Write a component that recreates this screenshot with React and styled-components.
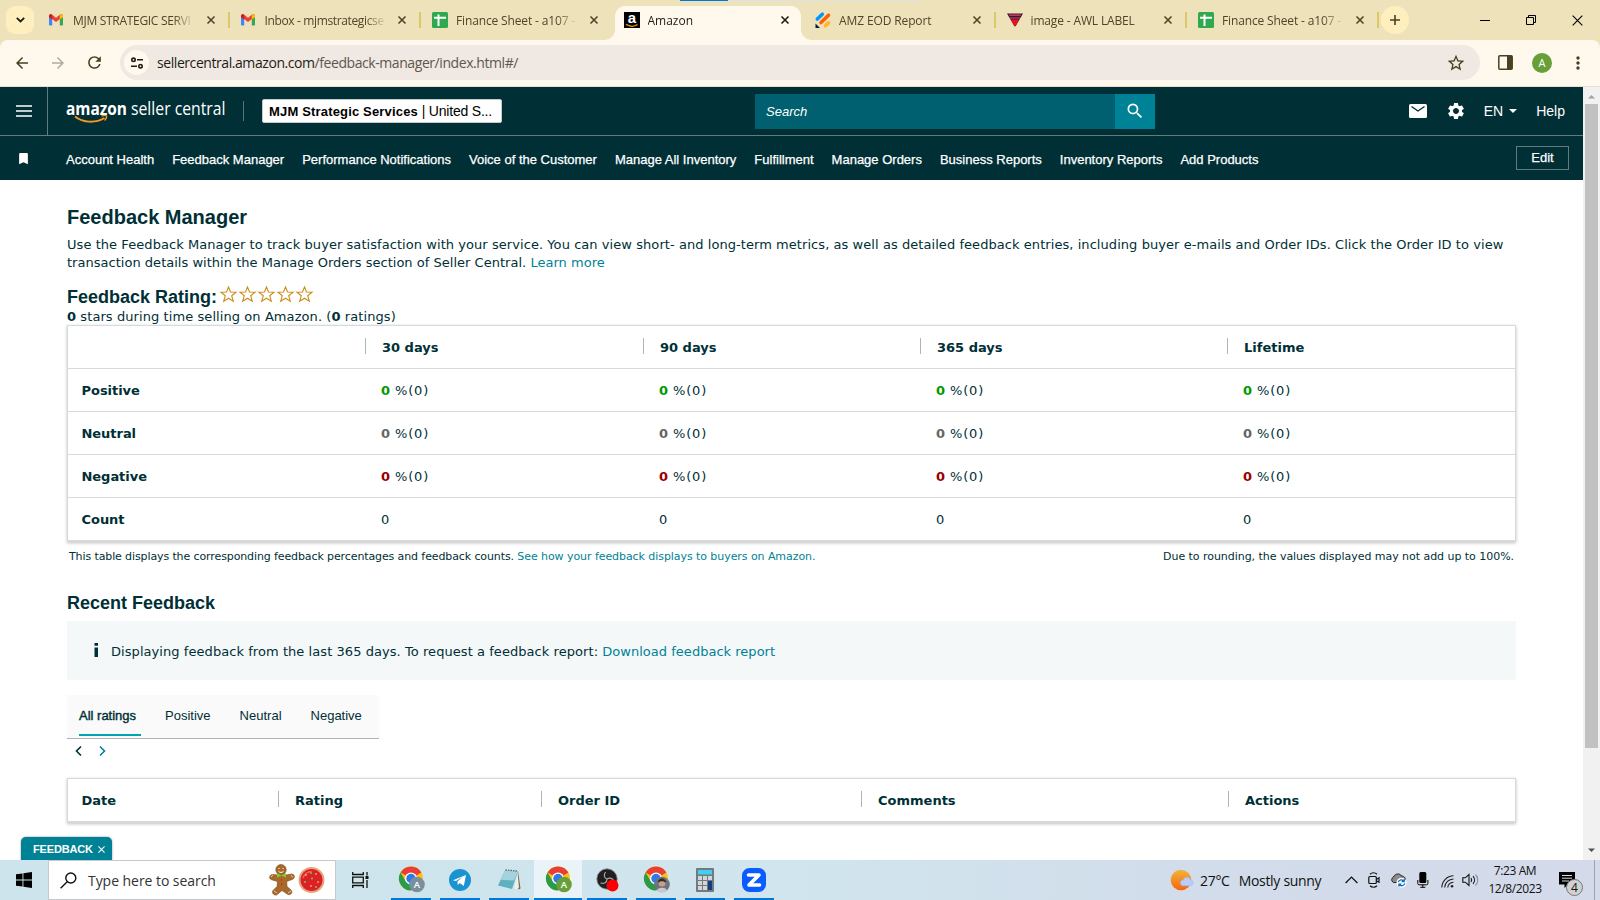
import React from 'react';
import styled, { createGlobalStyle } from 'styled-components';
import { MdArrowBack, MdArrowForward, MdRefresh, MdStarBorder, MdMoreVert, MdSettings, MdSearch, MdBookmark } from 'react-icons/md';

const GlobalStyle = createGlobalStyle`
  * { box-sizing: border-box; }
  body { margin: 0; overflow: hidden; background: #fff; }
  svg { display: block; flex: none; overflow: visible; }
`;

const ui = `'Open Sans', 'Noto Sans', sans-serif`;
const arial = `'Liberation Sans', Arial, sans-serif`;
const verdana = `Verdana, 'DejaVu Sans', sans-serif`;

/* ---------- data ---------- */

const browserTabs = [
  { icon: 'gmail', title: 'MJM STRATEGIC SERVI', spacing: -0.3 },
  { icon: 'gmail', title: 'Inbox - mjmstrategicse', spacing: -0.36 },
  { icon: 'sheet', title: 'Finance Sheet - a107 -', spacing: -0.14 },
  { icon: 'amazon', title: 'Amazon', active: true },
  { icon: 'amz', title: 'AMZ EOD Report', spacing: -0.12 },
  { icon: 'awl', title: 'image - AWL LABEL', spacing: -0.15 },
  { icon: 'sheet', title: 'Finance Sheet - a107 -', spacing: -0.14 },
];

const navLinks = [
  'Account Health', 'Feedback Manager', 'Performance Notifications', 'Voice of the Customer',
  'Manage All Inventory', 'Fulfillment', 'Manage Orders', 'Business Reports', 'Inventory Reports', 'Add Products',
];

const periods = ['30 days', '90 days', '365 days', 'Lifetime'];

const ratingRows = [
  { label: 'Positive', color: '#009900' },
  { label: 'Neutral', color: '#666666' },
  { label: 'Negative', color: '#990000' },
];

const feedbackColumns = ['Date', 'Rating', 'Order ID', 'Comments', 'Actions'];

/* ---------- icons ---------- */

const GmailIcon = () => (
  <svg width="16" height="16" viewBox="1 0 16 16">
    <path d="M1 4.2v8.6c0 .5.3.8.8.8h2.4V6.7z" fill="#4285f4" />
    <path d="M15 4.2v8.6c0 .5-.3.8-.8.8h-2.4V6.7z" fill="#34a853" />
    <path d="M1 4c0-1.600 1.700-2.300 2.900-1.400L8 5.700l4.100-3.100C13.300 1.700 15 2.400 15 4v.8L8 10 1 4.800z" fill="#ea4335" />
    <path d="M11.800 2.900C13.200 1.700 15 2.400 15 4v1.200l-3.200 2.300z" fill="#fbbc04" />
    <path d="M1 4c0-1.600 1.800-2.300 3.200-1.100v4.600L1 5.200z" fill="#c5221f" />
  </svg>
);

const SheetIcon = () => (
  <svg width="16" height="16" viewBox="0 0 16 16">
    <rect width="16" height="16" rx="1.500" fill="#2fa84f" />
    <path d="M2 5.800h12M6.500 2.500v11.500" stroke="#fff" strokeWidth="2" />
  </svg>
);

const AmazonIcon = () => (
  <svg width="16" height="16" viewBox="0 0 16 16">
    <rect width="16" height="16" fill="#000" />
    <text x="8" y="11" textAnchor="middle" fontFamily={arial} fontWeight="700" fontSize="15" fill="#fff">a</text>
    <path d="M2 12.300c3.500 2.600 8.500 2.600 11.500.3" stroke="#f90" strokeWidth="1.200" fill="none" />
  </svg>
);

const AmzIcon = () => (
  <svg width="16" height="16" viewBox="0 0 16 16" strokeLinecap="round" strokeWidth="3.600">
    <path d="M2.300 7l5-4.800" stroke="#0099ff" />
    <path d="M6 10.500l7.500-7.300" stroke="#ff6100" />
    <path d="M10.500 13.800l3-2.900" stroke="#ffb629" />
    <path d="M0.500 11.500v4.500h4.500z" fill="#0a1551" />
  </svg>
);

const AwlIcon = () => (
  <svg width="16" height="16" viewBox="0 0 16 16">
    <path d="M0 1.500h16L8.600 14.300H7.400z" fill="#3a1433" />
    <path d="M2.200 3.200h11.600M3 6h10" stroke="#d94a6a" strokeWidth="1.200" />
    <path d="M3.600 7.600h8.800L8 14.400z" fill="#f0101c" />
  </svg>
);

const favicons = { gmail: GmailIcon, sheet: SheetIcon, amazon: AmazonIcon, amz: AmzIcon, awl: AwlIcon };

const CrossIcon = ({ size = 8, width = 1.6 }) => (
  <svg width={size} height={size} viewBox="0 0 8 8" stroke="currentColor" strokeWidth={width}>
    <path d="M.5.5l7 7M7.500.5l-7 7" />
  </svg>
);

const SiteIcon = () => (
  <svg width="14" height="14" viewBox="0 0 14 14" stroke="#1f1b16" strokeWidth="1.600" fill="none">
    <circle cx="3.500" cy="3.800" r="1.700" />
    <path d="M7 3.800h6M1 10.200h6" />
    <circle cx="10.500" cy="10.200" r="1.700" />
  </svg>
);

const SellerCentralLogo = () => (
  <svg width="162" height="26" viewBox="0 0 162 26">
    <text x="0" y="14.500" fontFamily={ui} fontWeight="700" fontSize="18" textLength="61" lengthAdjust="spacingAndGlyphs" fill="#fff">amazon</text>
    <text x="65" y="14.500" fontFamily={ui} fontSize="18.500" textLength="94.500" lengthAdjust="spacingAndGlyphs" fill="#fff">seller central</text>
    <path d="M9 16.500c8 6.500 20.500 6.800 29.500 1.500" stroke="#f7981f" strokeWidth="1.900" fill="none" />
    <path d="M35.500 16.200c2-.9 4-.9 5-.3.400 1.200-.5 3.100-1.900 4.600" stroke="#f7981f" strokeWidth="1.300" fill="none" />
  </svg>
);

const MailIcon = () => (
  <svg width="18" height="14" viewBox="0 0 18 14">
    <rect width="18" height="14" rx="1.500" fill="#fff" />
    <path d="M2.500 2.500L9 7l6.500-4.500" stroke="#002f36" strokeWidth="1.400" fill="none" />
  </svg>
);

const StarIcon = () => (
  <svg width="17" height="17" viewBox="0 0 17 17">
    <path d="M8.500 1l2 5 5.500.2-4.300 3.500 1.600 5.500-4.800-3-4.800 3 1.600-5.500L1 6.200 6.500 6z" fill="#fff" stroke="#cb8d18" strokeWidth="1.100" />
  </svg>
);

const Chevron = ({ flip }) => (
  <svg width="7" height="10" viewBox="0 0 7 10" fill="none" stroke="currentColor" strokeWidth="1.600">
    <path d={flip ? 'M1 .5l4.500 4.500L1 9.500' : 'M6 .5L1.500 5 6 9.500'} />
  </svg>
);

const WindowsIcon = () => (
  <svg width="16" height="16" viewBox="0 0 16 16" fill="#000">
    <path d="M0 2.300l6.500-.9v6.100H0zM7.400 1.200L16 0v7.500H7.400zM0 8.500h6.500v6.100L0 13.700zM7.400 8.500H16V16l-8.600-1.200z" />
  </svg>
);

const LoupeIcon = () => (
  <svg width="17" height="17" viewBox="0 0 17 17" fill="none" stroke="#111" strokeWidth="1.400">
    <circle cx="10.800" cy="6" r="5" />
    <path d="M7.200 9.700L.6 16.300" />
  </svg>
);

const GingerbreadIcon = () => (
  <svg width="26" height="32" viewBox="0 0 26 32">
    <g fill="#a8692a" stroke="#7c4715" strokeWidth=".6">
      <path d="M3.500 10.500c-3 0-4 4-1 5.200L8.500 17.500 8 22.500l-4 4c-1.500 2 .5 5 3.500 4.500l5.500-4.500 6 4c3.500.6 5-2.500 3-4.500L18 22.500l-.3-5 5.300-2c3.500-1 3-5 0-5.500L17 11H9z" />
      <circle cx="12" cy="5.700" r="5.200" />
    </g>
    <path d="M9.500 4.500h1M13.500 4.500h1M9.500 7.300c1.500 1.500 3.500 1.500 5 0" stroke="#fff" strokeWidth="1" fill="none" />
    <path d="M8 9.500l4.500 1.700L17 9.500v4l-4.500-1.800L8 13.500z" fill="#7ed321" />
    <path d="M12 16h1M12 20h1" stroke="#d5262d" strokeWidth="2" />
    <path d="M2 13l2-2M22 11l1.800 2.500M5 27l3 2M19 29l3-2" stroke="#f3dfc0" strokeWidth=".8" />
  </svg>
);

const CookieIcon = () => (
  <svg width="27" height="28" viewBox="0 0 27 28">
    <circle cx="13.500" cy="14" r="13" fill="#e4a77b" />
    <circle cx="13.500" cy="14" r="11" fill="#dc2028" />
    <path d="M5 12c1-4 5-6.500 8.500-6.500" stroke="#f0625f" strokeWidth="1.500" fill="none" />
    <g fill="#ffb43c"><circle cx="8" cy="9" r=".9" /><circle cx="18" cy="8" r=".9" /><circle cx="13" cy="20" r=".9" /><circle cx="20" cy="16" r=".9" /></g>
    <g fill="#7bd34a"><circle cx="13" cy="7" r=".9" /><circle cx="7" cy="16" r=".9" /><circle cx="18" cy="21" r=".9" /><circle cx="14" cy="12.500" r=".9" /></g>
  </svg>
);

const TaskViewIcon = () => (
  <svg width="17" height="16" viewBox="0 0 17 16" fill="none" stroke="#111" strokeWidth="1.300">
    <path d="M.7 0v2.500h10.600V0M.7 16v-2.500h10.600V16M.7 5.200h10.600v5.600H.7zM15 0v3.500M15 8v8" />
    <path d="M13.500 5.500h3" strokeWidth="3" />
  </svg>
);

const ChromeIcon = ({ badge, letter, photo }) => (
  <svg width="28" height="28" viewBox="-1.500 0 28 28">
    <circle cx="12.500" cy="12.500" r="12" fill="#fbc116" />
    <path d="M12.500 12.500L2.100 6.500a12 12 0 0 1 20.800 0z" fill="#ea3e30" />
    <path d="M2.100 6.500a12 12 0 0 0 10.400 18l5.200-9-10.400 0z" fill="#2a9b49" />
    <circle cx="12.500" cy="12.500" r="6" fill="#fff" />
    <circle cx="12.500" cy="12.500" r="4.700" fill="#3079ea" />
    <circle cx="18.500" cy="18.500" r="7.800" fill={badge} />
    {letter && <text x="18.500" y="22" textAnchor="middle" fontFamily={ui} fontSize="9.500" fontWeight="600" fill="#fff">A</text>}
    {photo && (
      <g>
        <path d="M13.500 24.800c0-4 10-4 10 0a8 8 0 0 1-10 0z" fill="#c7c9d0" />
        <circle cx="18.500" cy="17" r="3.500" fill="#c79f87" />
        <path d="M14.500 17c-.5-6 8.500-6 8 0-1.500-2-6-2.500-8 0z" fill="#2f2b2b" />
      </g>
    )}
  </svg>
);

const TelegramIcon = () => (
  <svg width="22" height="22" viewBox="0 0 22 22">
    <circle cx="11" cy="11" r="11" fill="#1c93d1" />
    <path d="M4 11.200l13-5.300-2.200 11.200-4-3-2 1.900-.4-3.500 5.200-4.600-6.700 4.200z" fill="#fff" />
  </svg>
);

const NotepadIcon = () => (
  <svg width="24" height="24" viewBox="0 0 24 24">
    <path d="M21 3l2.500 17.500-1.500 1-3-3.500z" fill="#7a6a48" />
    <path d="M20.500 4.500L22 19.500l-3.500 2.300-1-2.800z" fill="#eceff0" />
    <path d="M8 2.500l13 1L15 21 1 17.500z" fill="#5fafbf" />
    <path d="M8 2.500l13 1-4 9L4 12z" fill="#a3d3dc" />
    <path d="M8.500 2l12.500 1" stroke="#666" strokeWidth="1.300" strokeDasharray="1.500 1" />
  </svg>
);

const ObsIcon = () => (
  <svg width="24" height="24" viewBox="0 0 24 24">
    <circle cx="12" cy="11" r="10.200" fill="#211f20" stroke="#888" strokeWidth=".8" />
    <path d="M12 11c-3-1-3.500-4-1.500-7M12 11c3-2 6-.5 7 2.500M12 11c0 3.500-3 5-6.500 4" stroke="#a9a9a9" strokeWidth="1.200" fill="none" />
    <circle cx="17.500" cy="17.500" r="6" fill="#f00" />
  </svg>
);

const CalculatorIcon = () => (
  <svg width="18" height="24" viewBox="0 0 18 24">
    <rect width="18" height="24" rx="1" fill="#73797f" />
    <rect x="2" y="2" width="14" height="4.500" fill="#3fd0f4" />
    <g fill="#d3d6d9">
      <path d="M2 8h4v4H2zM7 8h4v4H7zM12 8h4v4h-4zM2 13h4v4H2zM7 13h4v4H7zM2 18h4v4H2zM7 18h4v4H7z" />
    </g>
    <path d="M12 13h4v9h-4z" fill="#103f7c" />
  </svg>
);

const ZoomIcon = () => (
  <svg width="24" height="24" viewBox="0 0 24 24">
    <rect width="24" height="24" rx="7.500" fill="#0b5cff" />
    <path d="M6.500 7h10.500L7 17H17.500" stroke="#fff" strokeWidth="3.600" strokeLinejoin="round" strokeLinecap="round" fill="none" />
  </svg>
);

const WeatherIcon = () => (
  <svg width="23" height="22" viewBox="0 0 23 22">
    <defs>
      <linearGradient id="sun" x1="0" y1="0" x2="0" y2="1">
        <stop offset="0" stopColor="#f2b53c" />
        <stop offset="1" stopColor="#f7640e" />
      </linearGradient>
    </defs>
    <circle cx="10" cy="11" r="10.300" fill="url(#sun)" />
    <path d="M11 16.800a3.200 3.200 0 0 1 1.300-6c1-3.400 6-3.500 7.200-.1 3.200.3 3.700 5 .3 6.100z" fill="#b9cdf6" stroke="#9ab6ee" strokeWidth=".5" />
  </svg>
);

const MeetIcon = () => (
  <svg width="12" height="16" viewBox="0 0 12 16" fill="none" stroke="#111" strokeWidth="1.200">
    <path d="M2 2.200C4 .3 7 .3 9 2.200M2 13.800c2 1.900 5 1.900 7 0" />
    <rect x=".8" y="4.500" width="7.500" height="7" rx="1" />
    <path d="M8.300 7.500l2.700-1.700v4.500L8.300 8.700" />
  </svg>
);

const CloudIcon = () => (
  <svg width="17" height="15" viewBox="0 0 17 15">
    <path d="M3.500 9.500a3 3 0 0 1 0-5.500C5 .3 10 0 11.500 3c3 0 4.500 2.500 3.500 5l-3 1.500z" fill="#8b8b8b" stroke="#222" strokeWidth="1" />
    <circle cx="11.500" cy="9.800" r="5" fill="#fff" />
    <path d="M8.300 9.200c.7-2.600 4-3.200 5.700-1M14.800 10.400c-.7 2.600-4 3.200-5.700 1M14.200 6v2.500h-2.500M8.900 13.600v-2.500h2.500" stroke="#0f6cbd" strokeWidth="1.300" fill="none" />
  </svg>
);

const MicIcon = () => (
  <svg width="12" height="16" viewBox="0 0 12 16">
    <rect x="2.300" y="0" width="7" height="11" rx="1.500" fill="#000" />
    <path d="M.8 8v3.500c0 .8.5 1.300 1.300 1.300h7.500c.8 0 1.300-.5 1.300-1.300V8M5.800 12.500V15.300M3.300 15.300h5" stroke="#000" fill="none" strokeWidth="1" />
  </svg>
);

const WifiIcon = () => (
  <svg width="13" height="13" viewBox="0 0 13 13" fill="none" stroke="#222" strokeWidth="1.100">
    <path d="M.8 12.500C1 6 6 1 12.500.8M3.700 12.500c.3-5 4-8.300 8.800-8.500M6.800 12.500c.2-3 2.500-5 5.700-5.300" />
    <circle cx="11" cy="11.300" r="1.300" fill="#222" stroke="none" />
  </svg>
);

const SpeakerIcon = () => (
  <svg width="17" height="14" viewBox="0 0 17 14" fill="none" stroke="#111" strokeWidth="1.100">
    <path d="M.8 4.800h2.500L7 1.500v11L3.300 9.200H.8zM9 5c.8 1.200.8 2.800 0 4M11 3.200c2 2.200 2 5.400 0 7.600" />
    <path d="M13.500 1.500c3 3.200 3 7.800 0 11" stroke="#8b8f98" />
  </svg>
);

const NoticeIcon = () => (
  <svg width="16" height="16" viewBox="0 0 16 16">
    <path d="M0 0h16v12.500H9L5.500 16v-3.500H0z" fill="#000" />
    <path d="M3 3.500h10M3 6.200h10M3 9h7" stroke="#d5dde9" strokeWidth="1" />
  </svg>
);

/* ---------- browser frame ---------- */

const Screen = styled.div`
  width: 1600px;
  height: 900px;
  display: flex;
  flex-direction: column;
  overflow: hidden;
  background: #eee2bb;
  white-space: nowrap;
`;

const TabStrip = styled.div`
  position: relative;
  height: 40px;
  flex: none;
  display: flex;
  padding-left: 6px;
  font: 12px/16px ${ui};
  color: #4f4629;
`;

const TopStrip = styled.div`
  position: absolute;
  top: 0;
  left: 680px;
  width: 241px;
  height: 1px;
  background: linear-gradient(90deg, #0078d7 48px, #dfe1e0 48px);
`;

const TabSearch = styled.div`
  width: 28px;
  height: 28px;
  margin: 6px 4px 0 0;
  border-radius: 9px;
  background: #ffefbe;
  display: flex;
  align-items: center;
  justify-content: center;
`;

const BrowserTab = styled.div`
  position: relative;
  width: 191.5px;
  height: 40px;
  display: flex;
  align-items: center;
  padding-left: 11px;
  color: ${({ $active }) => ($active ? '#1f1b16' : '#4f4629')};

  &::before,
  &::after {
    content: '';
    display: ${({ $active }) => ($active ? 'block' : 'none')};
    position: absolute;
  }

  &::before {
    inset: 6px 3px 0 2px;
    border-radius: 10px 10px 0 0;
    background: #fff9ed;
  }

  /* flared feet of the active tab */
  &::after {
    inset: 30px -7px 0 -8px;
    background:
      radial-gradient(circle at 0 0, transparent 9.5px, #fff9ed 10px) left / 10px 10px no-repeat,
      radial-gradient(circle at 100% 0, transparent 9.5px, #fff9ed 10px) right / 10px 10px no-repeat;
  }

  > * { position: relative; }
`;

const TabDivider = styled.i`
  width: 2px;
  height: 16px;
  margin-left: 9px;
  background: #dfc765;
  visibility: ${({ $hidden }) => ($hidden ? 'hidden' : 'visible')};
`;

const TabTitle = styled.span`
  width: 122px;
  margin: 2px 8px 0;
  letter-spacing: ${({ $spacing = 0 }) => $spacing}px;
  mask-image: linear-gradient(90deg, #000 100px, transparent 122px);
`;

const TabClose = styled.span`
  width: 16px;
  display: flex;
  justify-content: center;
`;

const NewTab = styled.div`
  width: 28px;
  height: 28px;
  margin: 6px 0 0 2px;
  border-radius: 50%;
  background: #ffefbe;
  display: flex;
  align-items: center;
  justify-content: center;
`;

const WindowButtons = styled.div`
  margin-left: auto;
  display: flex;
  align-items: center;
  color: #000;

  > span {
    width: 46px;
    display: flex;
    justify-content: center;
  }
`;

const Toolbar = styled.div`
  height: 47px;
  flex: none;
  display: flex;
  align-items: center;
  padding: 0 0 1px 13px;
  background: #fff9ed;
  border-bottom: 1px solid #eadfce;
  border-radius: 8px 8px 0 0;
  color: #4a4022;
`;

const ToolButton = styled.span`
  width: 36px;
  flex: none;
  color: ${({ $muted }) => ($muted ? '#b3aa99' : 'inherit')};
`;

const AddressBar = styled.div`
  width: 1360px;
  flex: none;
  height: 35px;
  margin: 0 18px 0 -1px;
  padding: 0 14px 0 4px;
  display: flex;
  align-items: center;
  border-radius: 18px;
  background: #f0e8e2;
`;

const SiteButton = styled.div`
  width: 25px;
  height: 25px;
  margin-right: 8px;
  border-radius: 50%;
  background: #fff9ed;
  display: flex;
  align-items: center;
  justify-content: center;
`;

const Url = styled.span`
  flex: 1;
  padding-top: 1px;
  font: 14px/20px ${ui};
  letter-spacing: -0.43px;
  color: #5d574f;

  b { font-weight: 400; color: #1f1b16; }
`;

const Profile = styled.div`
  width: 20px;
  height: 20px;
  flex: none;
  margin: 0 16px 0 19px;
  border-radius: 50%;
  background: #689f38;
  color: #fff;
  font: 11px/20px ${ui};
  text-align: center;
`;

const Viewport = styled.div`
  flex: 1;
  min-height: 0;
  display: flex;
  background: #fff;
`;

const Scrollbar = styled.div`
  width: 17px;
  background: #f1f1f1;
  display: flex;
  flex-direction: column;
  align-items: center;
  justify-content: space-between;
  padding: 7px 0 7px;
`;

const ScrollThumb = styled.div`
  width: 13px;
  height: 644px;
  margin: 5px 0 auto;
  background: #c1c1c1;
`;

/* ---------- seller central ---------- */

const Page = styled.div`
  position: relative;
  width: 1583px;
  overflow: hidden;
  color: #002f36;
`;

const Masthead = styled.header`
  height: 49px;
  display: flex;
  align-items: center;
  background: #002f36;
  border-bottom: 1px solid #66797d;
  color: #fff;
  font: 14px/18px ${arial};
`;

const MenuButton = styled.div`
  width: 48px;
  height: 48px;
  padding-left: 16px;
  display: flex;
  align-items: center;
  border-right: 1px solid #66797d;
`;

const LogoLink = styled.div`
  width: 162px;
  height: 26px;
  margin: 3px 15px 0 18px;
`;

const ThinRule = styled.i`
  width: 1px;
  height: 20px;
  background: #5c6f73;
`;

const AccountBox = styled.div`
  width: 240px;
  height: 24px;
  margin: 0 253px 0 18px;
  padding: 0 6px;
  border-radius: 2px;
  border: 1px solid #c3cccd;
  background: #fff;
  color: #000;
  font: 14px/23px ${arial};
  letter-spacing: -0.2px;

  b { font-size: 13px; letter-spacing: 0.17px; }
`;

const SearchField = styled.div`
  width: 360px;
  height: 35px;
  padding-left: 11px;
  background: #00606f;
  font: italic 13px/35px ${arial};
`;

const SearchButton = styled.div`
  width: 40px;
  height: 35px;
  display: flex;
  align-items: center;
  justify-content: center;
  background: #008296;
`;

const HeaderTools = styled.div`
  margin-left: auto;
  padding-right: 18px;
  display: flex;
  align-items: center;

  > svg:first-child { margin-right: 19px; }
  > svg:nth-child(2) { margin-right: 18px; }
`;

const Caret = styled.i`
  margin: 0 19px 0 6px;
  border: 4.5px solid transparent;
  border-top-color: #fff;
  border-bottom: 0;
`;

const NavBar = styled.nav`
  height: 44px;
  display: flex;
  align-items: center;
  gap: 18px;
  padding: 0 14px 0 16px;
  background: #002f36;
  color: #fff;
  font: 13px/18px ${arial};
  -webkit-text-stroke: 0.25px #fff;

  > svg { margin: 0 17px 0 0; }
`;

const NavLink = styled.a`
  padding-top: 3px;
`;

const EditButton = styled.div`
  width: 53px;
  height: 24px;
  margin: 0 0 0 auto;
  border: 1px solid #66797d;
  text-align: center;
  line-height: 21px;
`;

const Main = styled.main`
  padding: 24px 67px 0;
  font: 13px/18px ${verdana};
`;

const Title = styled.h1`
  margin: 0 0 6px;
  font: bold 20px/26px ${arial};
`;

const Intro = styled.p`
  margin: 0 0 14px;
  letter-spacing: 0.061px;

  span { letter-spacing: 0.022px; }
`;

const Subtitle = styled.h2`
  margin: 0;
  display: flex;
  align-items: center;
  font: bold 18px/22px ${arial};
`;

const Stars = styled.span`
  display: flex;
  gap: 2px;
  margin: -5px 0 0 3px;
`;

const Summary = styled.div`
  height: 17px;
  letter-spacing: 0.08px;
`;

const Link = styled.a`
  color: #008296;
`;

const Table = styled.div`
  display: grid;
  grid-template-columns: ${({ $columns }) => $columns};
  border: 1px solid #d5dbdb;
  border-bottom-width: 2px;
  box-shadow: 0 1px 3px rgba(0, 0, 0, 0.25);
`;

const Cell = styled.div`
  height: ${({ $last }) => ($last ? 42 : 43)}px;
  padding-top: 2px;
  padding-left: ${({ $first }) => ($first ? 13.5 : 16)}px;
  display: flex;
  align-items: center;
  border-bottom: ${({ $last }) => ($last ? 0 : '1px solid #d5dbdb')};
  font-weight: ${({ $bold }) => ($bold ? 700 : 400)};
  letter-spacing: ${({ $bold }) => ($bold ? -0.04 : 0)}px;
`;

const HeadCell = styled(Cell)`
  padding-left: ${({ $first }) => ($first ? 13.5 : 0)}px;
  font-weight: 700;

  &::before {
    content: '';
    display: ${({ $first }) => ($first ? 'none' : 'block')};
    width: 1px;
    height: 16px;
    margin: -4px 16px 0 0;
    background: #aab7b8;
  }
`;

const Share = styled.b`
  margin-right: 5px;
  color: ${({ $color }) => $color};
`;

const Percent = styled.span`
  letter-spacing: 0.8px;
`;

const Notes = styled.div`
  display: flex;
  justify-content: space-between;
  padding: 6px 2px 0;
  margin-bottom: 26px;
  font-size: 11px;
  letter-spacing: -0.11px;

  > span > ${Link} { letter-spacing: -0.065px; }
  > span + span { letter-spacing: -0.04px; }
`;

const InfoBar = styled.div`
  height: 59px;
  margin: 7px 0 15px;
  padding: 2px 0 0 27px;
  display: flex;
  align-items: center;
  background: #f4f8f9;
  letter-spacing: 0.06px;

  ${Link} { letter-spacing: 0.02px; }
`;

const InfoMark = styled.svg`
  margin: -3px 12px 0 0;
`;

const RatingTabs = styled.div`
  width: 312px;
  height: 44px;
  display: flex;
  gap: 29px;
  padding-left: 12px;
  background: #fafafa;
  border-bottom: 1px solid #aeb4b5;
  font: 13px/41px ${arial};
`;

const RatingTab = styled.span`
  height: 41px;
  margin-right: ${({ $active }) => ($active ? -5 : 0)}px;
  padding-right: ${({ $active }) => ($active ? 5 : 0)}px;
  border-bottom: ${({ $active }) => ($active ? '2px solid #00a4b4' : 0)};
  -webkit-text-stroke: ${({ $active }) => ($active ? 0.4 : 0)}px currentColor;
`;

const Pager = styled.div`
  display: flex;
  gap: 17px;
  padding: 7px 0 0 8px;
  height: 39px;
  color: #002f36;

  svg:last-child { color: #008296; }
`;

const FeedbackFlag = styled.div`
  position: absolute;
  left: 21px;
  bottom: 0;
  width: 91px;
  height: 23px;
  padding: 1px 0 0 12px;
  display: flex;
  align-items: center;
  gap: 5px;
  border-radius: 5px 5px 0 0;
  background: #008296;
  box-shadow: 0 0 2px rgba(0, 0, 0, 0.5);
  color: #fff;
  font: bold 11px/22px ${arial};
  letter-spacing: -0.15px;
`;

/* ---------- taskbar ---------- */

const Taskbar = styled.footer`
  height: 40px;
  flex: none;
  display: flex;
  background: linear-gradient(90deg, #cde4ec 0, #d0e5ee 800px, #d2dcea 1200px, #d4daea 1600px);
  color: #111;
  font: 14px/20px ${ui};
`;

const StartButton = styled.div`
  width: 48px;
  display: flex;
  align-items: center;
  justify-content: center;
`;

const TaskSearch = styled.div`
  width: 288px;
  padding: 0 10px 0 11px;
  display: flex;
  align-items: center;
  background: #fff;
  border: 1px solid #c4c9cb;
  color: #333;

  > span {
    flex: 1;
    padding: 2px 0 0 11px;
    letter-spacing: -0.05px;
  }

  > svg:last-child { margin-left: 3px; }
`;

const TaskViewSlot = styled.div`
  width: 55px;
  display: flex;
  align-items: center;
  padding-left: 16px;
`;

const AppSlot = styled.div`
  width: ${({ $active }) => ($active ? 48 : 40)}px;
  margin-right: ${({ $active }) => ($active ? 5 : 9)}px;
  margin-left: ${({ $active }) => ($active ? -4 : 0)}px;
  display: flex;
  align-items: center;
  justify-content: center;
  background: ${({ $active }) => ($active ? '#eaf4f8' : 'transparent')};
  box-shadow: inset 0 -2px 0 #0078d7;
`;

const Tray = styled.div`
  margin-left: auto;
  display: flex;
  align-items: center;
`;

const Weather = styled.div`
  display: flex;
  align-items: center;
  width: 174px;
  letter-spacing: -0.3px;

  span { margin-left: 6px; padding-top: 1px; }
  span + span { margin-left: 9px; }
`;

const TrayIcons = styled.div`
  display: flex;
  align-items: center;
  gap: 10px;

  > svg:nth-child(5) { margin: 2px -2px 0 2px; }
`;

const Clock = styled.div`
  width: 60px;
  margin: 0 14px 0 6px;
  font: 12px/18px ${ui};
  letter-spacing: -0.4px;
  text-align: center;
`;

const Notice = styled.div`
  position: relative;
  width: 36px;
  border-right: 1px solid #9aa3b0;
  height: 40px;
  margin-right: 5px;
  padding-top: 12px;
`;

const NoticeCount = styled.span`
  position: absolute;
  left: 7px;
  top: 19px;
  width: 17px;
  height: 17px;
  border: 1px solid #777;
  border-radius: 50%;
  background: #d0d1d3;
  font: 12px/15px ${ui};
  text-align: center;
`;

const apps = [
  { name: 'chrome-work', icon: <ChromeIcon badge="#78909c" letter /> },
  { name: 'telegram', icon: <TelegramIcon /> },
  { name: 'notepad', icon: <NotepadIcon /> },
  { name: 'chrome', icon: <ChromeIcon badge="#689f38" letter />, active: true },
  { name: 'obs', icon: <ObsIcon /> },
  { name: 'chrome-personal', icon: <ChromeIcon badge="#6d7480" photo /> },
  { name: 'calculator', icon: <CalculatorIcon /> },
  { name: 'zoom', icon: <ZoomIcon /> },
];

const BrowserTop = () => (
  <>
    <TabStrip>
      <TopStrip />
      <TabSearch>
        <svg width="9" height="6" viewBox="0 0 9 6" fill="none" stroke="#1f1b16" strokeWidth="1.800"><path d="M.8.8l3.700 3.700L8.200.8" /></svg>
      </TabSearch>
      {browserTabs.map(({ icon, title, active, spacing }, i) => {
        const Favicon = favicons[icon];
        return (
          <BrowserTab key={i} $active={active}>
            <Favicon />
            <TabTitle $spacing={spacing}>{title}</TabTitle>
            <TabClose><CrossIcon /></TabClose>
            <TabDivider $hidden={active || browserTabs[i + 1]?.active} />
          </BrowserTab>
        );
      })}
      <NewTab>
        <svg width="10" height="10" viewBox="0 0 10 10" stroke="#4a4022" strokeWidth="1.600"><path d="M5 0v10M0 5h10" /></svg>
      </NewTab>
      <WindowButtons>
        <span><svg width="10" height="10" viewBox="0 0 10 10" stroke="#000"><path d="M0 5.500h10" /></svg></span>
        <span>
          <svg width="10" height="10" viewBox="0 0 10 10" stroke="#000" fill="none"><path d="M.5 2.500h7v7h-7zM2.500 2.500v-2h7v7h-2" /></svg>
        </span>
        <span><CrossIcon size={11} width={0.8} /></span>
      </WindowButtons>
    </TabStrip>
    <Toolbar>
      <ToolButton><MdArrowBack size={18} /></ToolButton>
      <ToolButton $muted><MdArrowForward size={18} /></ToolButton>
      <ToolButton><MdRefresh size={19} /></ToolButton>
      <AddressBar>
        <SiteButton><SiteIcon /></SiteButton>
        <Url><b>sellercentral.amazon.com</b>/feedback-manager/index.html#/</Url>
        <MdStarBorder size={20} />
      </AddressBar>
      <svg width="15" height="15" viewBox="0 0 15 15"><rect x=".8" y=".8" width="13.400" height="13.400" rx="1" fill="none" stroke="#4a4022" strokeWidth="1.500" /><path d="M9 1h5v13H9z" fill="#4a4022" /></svg>
      <Profile>A</Profile>
      <MdMoreVert size={20} />
    </Toolbar>
  </>
);

const PageHeader = () => (
  <>
    <Masthead>
      <MenuButton>
        <svg width="16" height="12" viewBox="0 0 16 12" stroke="#fff" strokeWidth="1.600"><path d="M0 1h16M0 6h16M0 11h16" /></svg>
      </MenuButton>
      <LogoLink><SellerCentralLogo /></LogoLink>
      <ThinRule />
      <AccountBox><b>MJM Strategic Services</b> | United S...</AccountBox>
      <SearchField>Search</SearchField>
      <SearchButton><MdSearch size={20} /></SearchButton>
      <HeaderTools>
        <MailIcon />
        <MdSettings size={20} />
        EN <Caret /> Help
      </HeaderTools>
    </Masthead>
    <NavBar>
      <MdBookmark size={15} />
      {navLinks.map((label) => <NavLink key={label}>{label}</NavLink>)}
      <EditButton>Edit</EditButton>
    </NavBar>
  </>
);

const FeedbackPage = () => (
  <Main>
    <Title>Feedback Manager</Title>
    <Intro>
      Use the Feedback Manager to track buyer satisfaction with your service. You can view short- and long-term metrics, as well as detailed feedback entries, including buyer e-mails and Order IDs. Click the Order ID to view
      <br />
      <span>transaction details within the Manage Orders section of Seller Central. <Link>Learn more</Link></span>
    </Intro>
    <Subtitle>
      Feedback Rating:
      <Stars>{[1, 2, 3, 4, 5].map((n) => <StarIcon key={n} />)}</Stars>
    </Subtitle>
    <Summary><b>0</b> stars during time selling on Amazon. (<b>0</b> ratings)</Summary>
    <Table $columns="297px 278px 277px 307px 1fr">
      <HeadCell $first />
      {periods.map((p) => <HeadCell key={p}>{p}</HeadCell>)}
      {ratingRows.map(({ label, color }) => (
        <React.Fragment key={label}>
          <Cell $first $bold>{label}</Cell>
          {periods.map((p) => <Cell key={p}><Share $color={color}>0</Share><Percent>%(0)</Percent></Cell>)}
        </React.Fragment>
      ))}
      <Cell $first $bold $last>Count</Cell>
      {periods.map((p) => <Cell key={p} $last>0</Cell>)}
    </Table>
    <Notes>
      <span>This table displays the corresponding feedback percentages and feedback counts. <Link>See how your feedback displays to buyers on Amazon.</Link></span>
      <span>Due to rounding, the values displayed may not add up to 100%.</span>
    </Notes>
    <Subtitle>Recent Feedback</Subtitle>
    <InfoBar>
      <InfoMark width="5" height="14" viewBox="0 0 5 14" fill="#002f36"><path d="M.5 0h3.500v2.800H.5zM.5 4.500H4V14H.5z" /></InfoMark>
      Displaying feedback from the last 365 days. To request a feedback report:&nbsp;<Link>Download feedback report</Link>
    </InfoBar>
    <RatingTabs>
      <RatingTab $active>All ratings</RatingTab>
      <RatingTab>Positive</RatingTab>
      <RatingTab>Neutral</RatingTab>
      <RatingTab>Negative</RatingTab>
    </RatingTabs>
    <Pager><Chevron /><Chevron flip /></Pager>
    <Table $columns="210px 263px 320px 367px 1fr">
      {feedbackColumns.map((c, i) => <HeadCell key={c} $first={i === 0} $last>{c}</HeadCell>)}
    </Table>
  </Main>
);

const WindowsTaskbar = () => (
  <Taskbar>
    <StartButton><WindowsIcon /></StartButton>
    <TaskSearch>
      <LoupeIcon />
      <span>Type here to search</span>
      <GingerbreadIcon />
      <CookieIcon />
    </TaskSearch>
    <TaskViewSlot><TaskViewIcon /></TaskViewSlot>
    {apps.map(({ name, icon, active }) => <AppSlot key={name} $active={active}>{icon}</AppSlot>)}
    <Tray>
      <Weather><WeatherIcon /><span>27°C</span><span>Mostly sunny</span></Weather>
      <TrayIcons>
        <svg width="13" height="8" viewBox="0 0 13 8" fill="none" stroke="#111" strokeWidth="1.300"><path d="M.6 7l5.900-5.900L12.400 7" /></svg>
        <MeetIcon />
        <CloudIcon />
        <MicIcon />
        <WifiIcon />
        <SpeakerIcon />
      </TrayIcons>
      <Clock>7:23 AM<br />12/8/2023</Clock>
      <Notice><NoticeIcon /><NoticeCount>4</NoticeCount></Notice>
    </Tray>
  </Taskbar>
);

const App = () => (
  <Screen>
    <GlobalStyle />
    <BrowserTop />
    <Viewport>
      <Page>
        <PageHeader />
        <FeedbackPage />
        <FeedbackFlag>FEEDBACK <CrossIcon size={7} width={1.2} /></FeedbackFlag>
      </Page>
      <Scrollbar>
        <svg width="7" height="5" viewBox="0 0 7 5"><path d="M0 4.500L3.500 1 7 4.500z" fill="#a3a3a3" /></svg>
        <ScrollThumb />
        <svg width="7" height="5" viewBox="0 0 7 5"><path d="M0 .5L3.500 4 7 .5z" fill="#505050" /></svg>
      </Scrollbar>
    </Viewport>
    <WindowsTaskbar />
  </Screen>
);

export default App;
